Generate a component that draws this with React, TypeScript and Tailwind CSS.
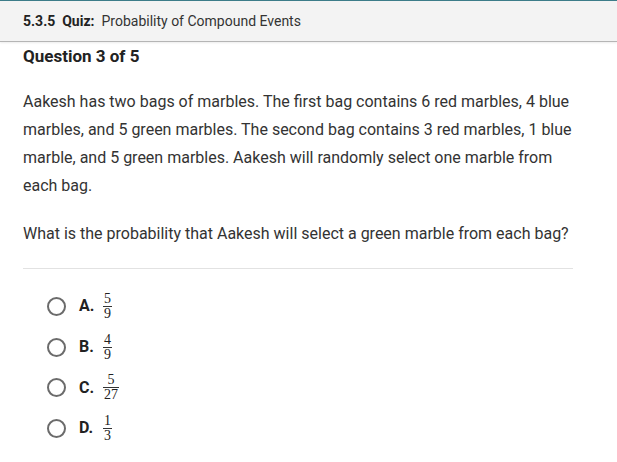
const options = [
  { letter: "A.", num: "5", den: "9" },
  { letter: "B.", num: "4", den: "9" },
  { letter: "C.", num: "5", den: "27" },
  { letter: "D.", num: "1", den: "3" },
];

const Fraction = ({ num, den }: { num: string; den: string }) => (
  <span className="inline-flex flex-col items-center font-[family-name:'Liberation_Serif',serif] text-[14px] leading-[12px] text-[#222]">
    <span className="px-[1px]">{num}</span>
    <span className="my-[1px] w-full border-t border-[#333]" />
    <span className="px-[1px]">{den}</span>
  </span>
);

export default function App() {
  return (
    <div className="w-[617px] h-[462px] overflow-hidden bg-white font-['Roboto',sans-serif] text-[#222]">
      <div className="h-[1px] bg-[#3d7d8a]" />
      <div className="flex h-[41px] items-center border-b border-[#b5b5b5] bg-[#f3f3f3] px-[23px] text-[14px] shadow-[0_1px_2px_rgba(0,0,0,0.08)]">
        <span className="font-bold">5.3.5</span>
        <span className="ml-[7px] font-bold">Quiz:</span>
        <span className="ml-[7px] text-[#333]">Probability of Compound Events</span>
      </div>

      <div className="px-[23px]">
        <h2 className="mt-[3px] text-[17px] font-bold leading-[22px]">Question 3 of 5</h2>

        <p className="mt-[21px] w-[560px] text-[16px] leading-[28px] text-[#333]">
          Aakesh has two bags of marbles. The first bag contains 6 red marbles, 4 blue marbles, and 5 green marbles.
          The second bag contains 3 red marbles, 1 blue marble, and 5 green marbles. Aakesh will randomly select one
          marble from each bag.
        </p>

        <p className="mt-[20px] text-[16px] leading-[28px] text-[#333]">
          What is the probability that Aakesh will select a green marble from each bag?
        </p>

        <div className="mt-[20px] w-[550px] border-t border-[#e2e2e2]" />

        <div className="mt-[17px] flex flex-col">
          {options.map((o) => (
            <div key={o.letter} className="flex h-[40.7px] items-center pl-[24px]">
              <span className="h-[19px] w-[19px] rounded-full border-2 border-[#6b6b6b]" />
              <span className="ml-[13px] w-[24px] text-[16px] font-bold">{o.letter}</span>
              <Fraction num={o.num} den={o.den} />
            </div>
          ))}
        </div>
      </div>
    </div>
  );
}
